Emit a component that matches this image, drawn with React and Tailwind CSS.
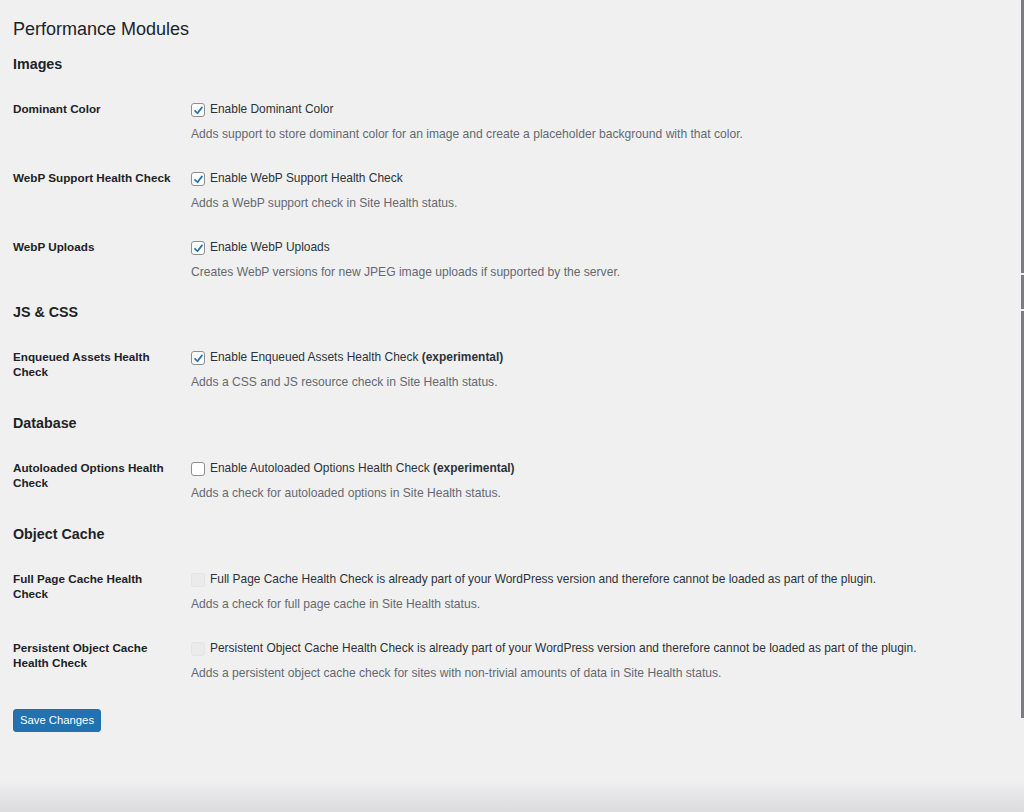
import React from 'react';

const sections = [
  {
    title: 'Images',
    rows: [
      { label: 'Dominant Color', text: 'Enable Dominant Color', desc: 'Adds support to store dominant color for an image and create a placeholder background with that color.', checked: true },
      { label: 'WebP Support Health Check', text: 'Enable WebP Support Health Check', desc: 'Adds a WebP support check in Site Health status.', checked: true },
      { label: 'WebP Uploads', text: 'Enable WebP Uploads', desc: 'Creates WebP versions for new JPEG image uploads if supported by the server.', checked: true },
    ],
  },
  {
    title: 'JS & CSS',
    rows: [
      { label: 'Enqueued Assets Health Check', text: 'Enable Enqueued Assets Health Check', experimental: true, desc: 'Adds a CSS and JS resource check in Site Health status.', checked: true },
    ],
  },
  {
    title: 'Database',
    rows: [
      { label: 'Autoloaded Options Health Check', text: 'Enable Autoloaded Options Health Check', experimental: true, desc: 'Adds a check for autoloaded options in Site Health status.', checked: false },
    ],
  },
  {
    title: 'Object Cache',
    rows: [
      { label: 'Full Page Cache Health Check', text: 'Full Page Cache Health Check is already part of your WordPress version and therefore cannot be loaded as part of the plugin.', desc: 'Adds a check for full page cache in Site Health status.', disabled: true },
      { label: 'Persistent Object Cache Health Check', text: 'Persistent Object Cache Health Check is already part of your WordPress version and therefore cannot be loaded as part of the plugin.', desc: 'Adds a persistent object cache check for sites with non-trivial amounts of data in Site Health status.', disabled: true },
    ],
  },
];

const Checkbox = ({ checked, disabled }) => {
  if (disabled) {
    return <span className="w-[14px] h-[14px] rounded-[3px] border border-[#e4e4e6] bg-[#ebebec] shrink-0" />;
  }
  return (
    <span className="w-[14px] h-[14px] rounded-[3px] border border-[#8c8f94] bg-white shrink-0 flex items-center justify-center">
      {checked && (
        <svg width="11" height="11" viewBox="0 0 12 12">
          <path d="M2.2 6.3 L4.9 9 L9.8 2.6" fill="none" stroke="#2271b1" strokeWidth="1.9" strokeLinecap="round" strokeLinejoin="round" />
        </svg>
      )}
    </span>
  );
};

const Row = ({ row }) => (
  <div className="flex">
    <div className="w-[178px] shrink-0 pr-3 text-[11.7px] leading-[15px] font-bold text-[#1d2327]">{row.label}</div>
    <div className="flex flex-col gap-[6px]">
      <label className="flex items-center gap-[5px] h-[18px] text-[11.95px] text-[#2c3338]">
        <Checkbox checked={row.checked} disabled={row.disabled} />
        <span>
          {row.text}
          {row.experimental && <b className="font-bold"> (experimental)</b>}
        </span>
      </label>
      <p className="text-[12.1px] leading-[18px] text-[#646970]">{row.desc}</p>
    </div>
  </div>
);

const App = () => {
  return (
    <div className="relative min-h-[812px] bg-[#f0f0f1] flex overflow-hidden" style={{ fontFamily: '"Liberation Sans", Arial, sans-serif' }}>
      <div className="flex-1 pl-[13px] pt-[15px]">
        <h1 className="text-[18px] leading-[28px] text-[#1d2327]">Performance Modules</h1>
        {sections.map((s, i) => (
          <section key={s.title} className={i === 0 ? 'mt-[11px]' : i === 1 ? 'mt-[21px]' : 'mt-[22px]'}>
            <h2 className="text-[14.3px] leading-[20px] font-bold text-[#1d2327]">{s.title}</h2>
            <div className="mt-[27px] flex flex-col gap-[27px]">
              {s.rows.map((r) => <Row key={r.label} row={r} />)}
            </div>
          </section>
        ))}
        <button className="mt-[27px] w-[88px] h-[23px] rounded-[3px] bg-[#2271b1] border border-[#2271b1] text-white text-[11.3px]">
          Save Changes
        </button>
      </div>
      <div className="w-[3px] flex flex-col gap-[2px] h-[718px]">
        <div className="h-[273px] bg-[#7c7c80]" />
        <div className="h-[34px] bg-[#7c7c80]" />
        <div className="flex-1 bg-[#7c7c80]" />
      </div>
      <div className="absolute left-0 right-0 bottom-0 h-[30px] bg-gradient-to-b from-[#f0f0f1] via-[#e4e4e6] to-[#dcdcde]" />
    </div>
  );
};

export default App;
